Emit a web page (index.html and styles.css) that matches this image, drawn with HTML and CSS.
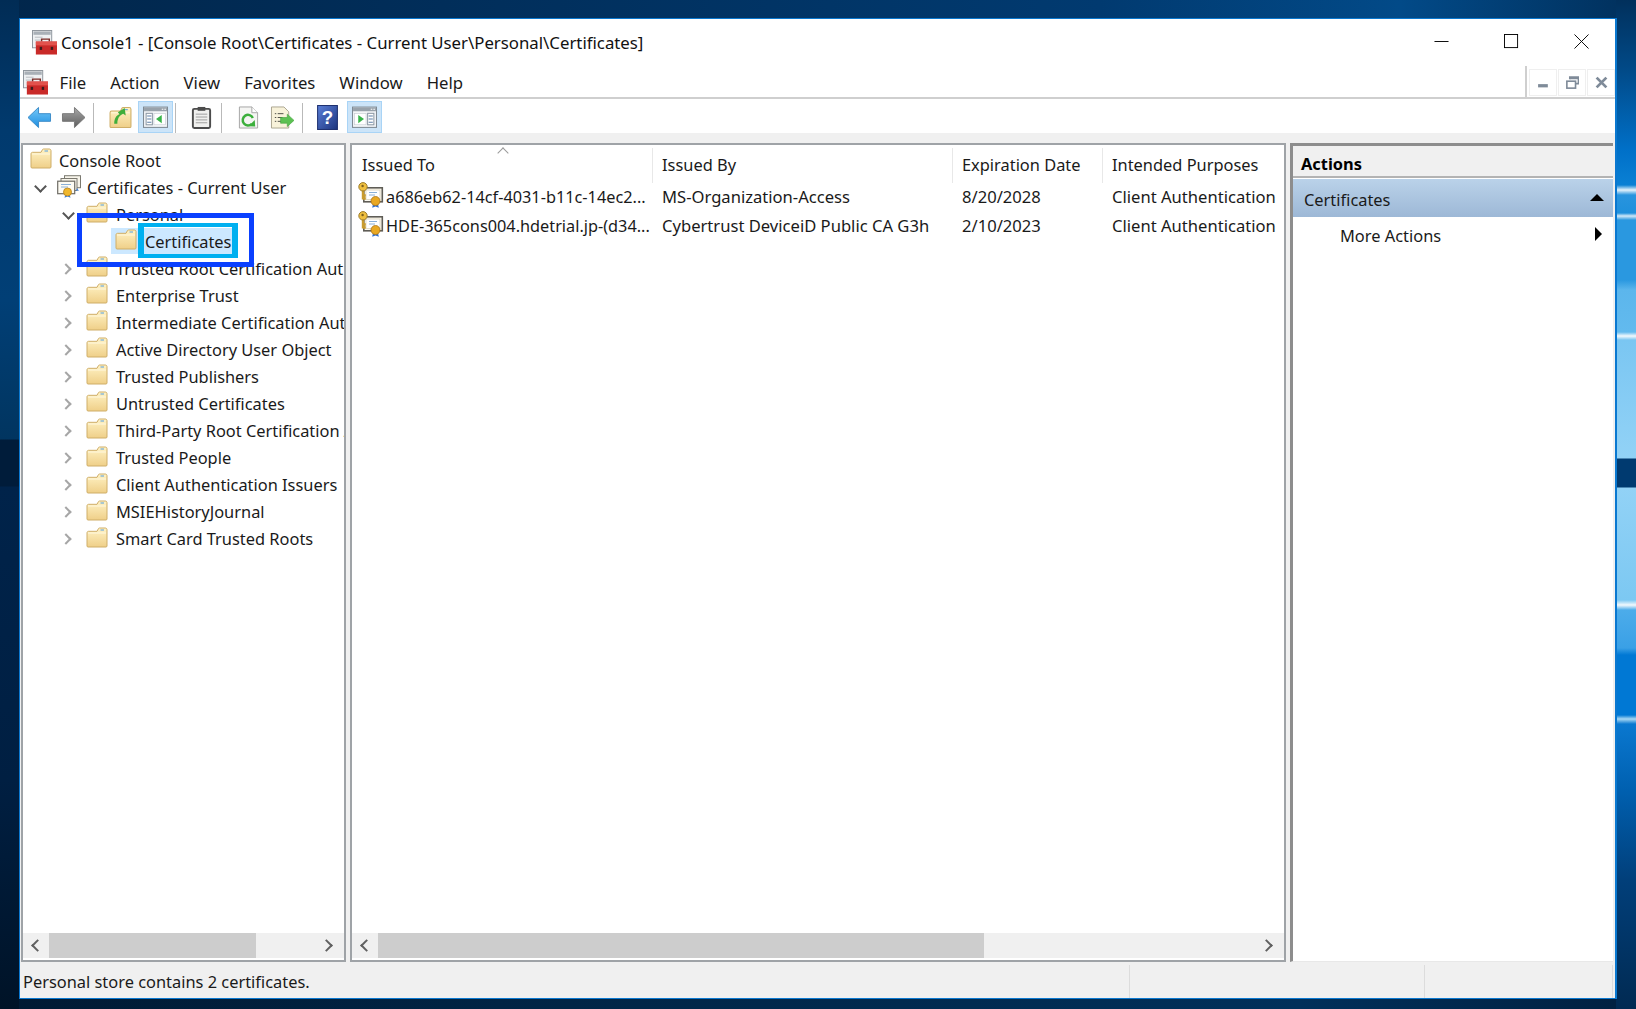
FILE: index.html
```html
<!DOCTYPE html>
<html lang="en">
<head>
<meta charset="utf-8">
<title>Console1</title>
<link rel="stylesheet" href="styles.css">
</head>
<body>
<svg class="defs" width="0" height="0" aria-hidden="true">
  <defs>
    <linearGradient id="fg" x1="0" y1="0" x2="0" y2="1"><stop offset="0" stop-color="#fff3c6"/><stop offset="1" stop-color="#efcf88"/></linearGradient>
    <symbol id="folder" viewBox="0 0 22 21">
      <path d="M1 19V6c0-1 .6-1.700 1.500-1.700H11l1.500-2.800c.2-.3.500-.5.900-.5h5.900c1 0 1.700.7 1.700 1.700V19c0 .6-.4 1-1 1H2c-.6 0-1-.4-1-1z" fill="url(#fg)" stroke="#cfae68"/>
      <path d="M2 6h18" stroke="#fff8de" fill="none"/>
      <path d="M14.500 3h3.500" stroke="#63a6de" stroke-width="1.100"/>
    </symbol>
    <symbol id="cert" viewBox="0 0 26 26">
      <rect x="5.800" y="5.800" width="18.500" height="14" fill="#fbf8ee" stroke="#5f5d56" stroke-width="1.600"/>
      <rect x="8" y="8" width="14" height="9.500" fill="#fff" stroke="#d3ccb4" stroke-width=".7"/>
      <path d="M11 10.500h8M11 13h6" stroke="#8ab0d8"/>
      <path d="M5 8v9.500M5 13.500h2.800M5 16.500h2.800" stroke="#c99c2e" stroke-width="2.400" fill="none"/>
      <circle cx="5" cy="4.800" r="4.200" fill="#efbf3e" stroke="#9c7c2c"/>
      <circle cx="4.600" cy="4" r="1.200" fill="#7d601e"/>
      <path d="M15 22l-.8 3.800 3.300-1.400 3.300 1.400-.8-3.800z" fill="#2f6fd0"/>
      <circle cx="17.500" cy="19" r="4.500" fill="#e9a822" stroke="#a8741a" stroke-width=".8"/>
    </symbol>
    <symbol id="certs" viewBox="0 0 24 23">
      <rect x="7.500" y=".7" width="16" height="12" fill="#f7f4ea" stroke="#7b7970"/>
      <rect x="4" y="3.500" width="16" height="12" fill="#f7f4ea" stroke="#7b7970"/>
      <rect x=".7" y="6.200" width="17" height="12.500" fill="#fdfbf3" stroke="#6f6d66" stroke-width="1.200"/>
      <path d="M4 9.500h10M4 12h7" stroke="#8ab0d8"/>
      <path d="M8.500 19l-1 3.800 3-1.300 3 1.300-1-3.800z" fill="#3f7fd6"/>
      <path d="M20 13l-1 3 1.500-.6 1.500.6z" fill="#3f7fd6"/>
      <circle cx="10.500" cy="17" r="4" fill="#f0b72c" stroke="#b8821a" stroke-width=".8"/>
    </symbol>
    <symbol id="toolbox" viewBox="0 0 26 26">
      <rect x=".5" y=".5" width="20" height="18" fill="#eef0f2" stroke="#8d949b"/>
      <rect x="1.500" y="1.500" width="18" height="3.500" fill="#a9b0b7"/>
      <path d="M3 7.500h8M3 10.500h6" stroke="#b7bcc1"/>
      <path d="M10 12V9.500h8V12" fill="none" stroke="#7a2b26" stroke-width="1.500"/>
      <rect x="4" y="12" width="22" height="13.500" fill="#c92a28"/>
      <rect x="4" y="12" width="22" height="4" fill="#e2524c"/>
      <rect x="8" y="17.500" width="2.500" height="3.200" fill="#3a1c1c"/>
      <rect x="19.500" y="17.500" width="2.500" height="3.200" fill="#3a1c1c"/>
    </symbol>
    <symbol id="pane" viewBox="0 0 24 22">
      <rect x=".5" y="1" width="23" height="19.500" fill="#f4f6f8" stroke="#7f8a94"/>
      <rect x="1" y="1.500" width="22" height="3.500" fill="#98a2ab"/>
      <path d="M18 3h1.500M20.500 3H22" stroke="#fff"/>
    </symbol>
  </defs>
</svg>

<main class="window">
  <header class="titlebar">
    <svg class="app-icon" viewBox="0 0 26 26"><use href="#toolbox"/></svg>
    <span class="title">Console1 - [Console Root\Certificates - Current User\Personal\Certificates]</span>
    <div class="caption">
      <svg viewBox="0 0 16 16"><path d="M.5 8h15" stroke="#000" fill="none"/></svg>
      <svg viewBox="0 0 16 16"><rect x=".5" y=".5" width="14" height="14" fill="none" stroke="#000"/></svg>
      <svg viewBox="0 0 16 16"><path d="M.5.500l15 15M15.500.500l-15 15" stroke="#000" fill="none"/></svg>
    </div>
  </header>

  <div class="menurow">
    <nav class="menubar">
      <svg class="menu-icon" viewBox="0 0 26 26"><use href="#toolbox"/></svg>
      <span>File</span><span>Action</span><span>View</span><span>Favorites</span><span>Window</span><span>Help</span>
    </nav>
    <div class="mdi">
      <span class="mdi-btn"><svg viewBox="0 0 12 12"><rect x="1" y="7.500" width="9" height="3" fill="#7f8b99"/></svg></span>
      <span class="mdi-btn"><svg viewBox="0 0 12 12"><path d="M3.500 3V1h8v6H9" fill="none" stroke="#7f8b99" stroke-width="1.500"/><path d="M3.500 2h8" stroke="#7f8b99" stroke-width="2"/><rect x=".8" y="4.800" width="8" height="6.400" fill="#fff" stroke="#7f8b99" stroke-width="1.500"/></svg></span>
      <span class="mdi-btn"><svg viewBox="0 0 12 12"><path d="M1.500 1.500l9 9M10.500 1.500l-9 9" stroke="#7f8b99" stroke-width="2.600"/></svg></span>
    </div>
  </div>

  <div class="toolbar">
    <span class="tool"><svg viewBox="0 0 26 24"><defs><linearGradient id="ba" x1="0" y1="0" x2="0" y2="1"><stop offset="0" stop-color="#74c8f8"/><stop offset="1" stop-color="#1f8ee0"/></linearGradient></defs><path d="M1 12L12 1.500V8h12.500v8H12v6.500z" fill="url(#ba)" stroke="#3b8bc8" stroke-linejoin="round"/></svg></span>
    <span class="tool"><svg viewBox="0 0 26 24"><defs><linearGradient id="fa" x1="0" y1="0" x2="0" y2="1"><stop offset="0" stop-color="#a8a8a8"/><stop offset="1" stop-color="#5e5e5e"/></linearGradient></defs><path d="M25 12L14 1.500V8H1.500v8H14v6.500z" fill="url(#fa)" stroke="#777" stroke-linejoin="round"/></svg></span>
    <i class="sep sep-a"></i>
    <span class="tool tool-up"><svg viewBox="0 0 22 22"><use href="#folder"/><path d="M5 17c0-5 2-8 5-9L8.500 6 15 2l1 7-2.500-1.500C10 9 8 12 8 17z" fill="#3fae3a"/></svg></span>
    <span class="tool on tool-tree"><svg viewBox="0 0 24 22"><use href="#pane"/><rect x="3" y="7" width="6" height="11" fill="#fff" stroke="#8d99a5"/><path d="M4 9.500h4M4 12.500h4M4 15.500h4" stroke="#5d7fa8"/><rect x="10.500" y="7" width="11" height="11" fill="#fff" stroke="#c4cbd1" stroke-width=".6"/><path d="M18 8.500v8L12.500 12.500z" fill="#39b54a"/></svg></span>
    <i class="sep sep-b"></i>
    <span class="tool tool-clip"><svg viewBox="0 0 22 24"><rect x="2" y="3" width="18" height="20" rx="1.500" fill="#f0f0ee" stroke="#4c4c4c" stroke-width="2"/><rect x="7" y="1" width="8" height="4" fill="#4c4c4c"/><path d="M5 8.500h12M5 11.500h12M5 14.500h12M5 17.500h12" stroke="#9c9c9c"/></svg></span>
    <i class="sep sep-c"></i>
    <span class="tool tool-refresh"><svg viewBox="0 0 22 24"><path d="M1.500 1h13l6 6v16h-19z" fill="#f5f5f3" stroke="#a4a4a4"/><path d="M14.500 1v6h6" fill="#fff" stroke="#a4a4a4"/><path d="M15.500 12.500a5.500 5.500 0 1 0-1 6" fill="none" stroke="#3caf3c" stroke-width="2.600"/><path d="M11 21l7 .5-.5-7z" fill="#3caf3c"/></svg></span>
    <span class="tool tool-export"><svg viewBox="0 0 26 24"><path d="M1.500 1h13l5 5v17h-18z" fill="#f8f2da" stroke="#a9a48e"/><path d="M5 8h1.500M8 8h6M5 12h1.500M8 12h5M5 16h1.500M8 16h4" stroke="#4b4b45"/><path d="M25 15l-7-6.500V12h-7v6h7v3.500z" fill="#5cc152" stroke="#3f9f3a" stroke-width=".6"/></svg></span>
    <i class="sep sep-d"></i>
    <span class="tool tool-help"><svg viewBox="0 0 20 24"><defs><linearGradient id="hp" x1="0" y1="0" x2="1" y2="1"><stop offset="0" stop-color="#5c80d8"/><stop offset="1" stop-color="#1c347e"/></linearGradient></defs><rect x=".5" y=".5" width="19" height="23" fill="url(#hp)" stroke="#1f3170"/><text x="10" y="18" class="q">?</text></svg></span>
    <span class="tool on tool-last"><svg viewBox="0 0 24 22"><use href="#pane"/><rect x="15" y="7" width="6" height="11" fill="#fff" stroke="#8d99a5"/><path d="M16 9.500h4M16 12.500h4M16 15.500h4" stroke="#5d7fa8"/><rect x="2.500" y="7" width="11" height="11" fill="#fff" stroke="#c4cbd1" stroke-width=".6"/><path d="M6 8.500v8l5.500-4z" fill="#39b54a"/></svg></span>
  </div>

  <div class="panes">
    <section class="pane tree">
      <ul class="nodes">
        <li class="node l0"><i class="tw"></i><svg class="ic"><use href="#folder"/></svg><span>Console Root</span></li>
        <li class="node l1"><i class="tw open"></i><svg class="ic-certs"><use href="#certs"/></svg><span>Certificates - Current User</span></li>
        <li class="node l2"><i class="tw open"></i><svg class="ic"><use href="#folder"/></svg><span>Personal</span></li>
        <li class="node l3 sel"><i class="tw"></i><span class="selbox"><svg class="ic"><use href="#folder"/></svg><span class="sel-t">Certificates</span></span></li>
        <li class="node l2"><i class="tw shut"></i><svg class="ic"><use href="#folder"/></svg><span>Trusted Root Certification Authorities</span></li>
        <li class="node l2"><i class="tw shut"></i><svg class="ic"><use href="#folder"/></svg><span>Enterprise Trust</span></li>
        <li class="node l2"><i class="tw shut"></i><svg class="ic"><use href="#folder"/></svg><span>Intermediate Certification Authorities</span></li>
        <li class="node l2"><i class="tw shut"></i><svg class="ic"><use href="#folder"/></svg><span>Active Directory User Object</span></li>
        <li class="node l2"><i class="tw shut"></i><svg class="ic"><use href="#folder"/></svg><span>Trusted Publishers</span></li>
        <li class="node l2"><i class="tw shut"></i><svg class="ic"><use href="#folder"/></svg><span>Untrusted Certificates</span></li>
        <li class="node l2"><i class="tw shut"></i><svg class="ic"><use href="#folder"/></svg><span>Third-Party Root Certification Authorities</span></li>
        <li class="node l2"><i class="tw shut"></i><svg class="ic"><use href="#folder"/></svg><span>Trusted People</span></li>
        <li class="node l2"><i class="tw shut"></i><svg class="ic"><use href="#folder"/></svg><span>Client Authentication Issuers</span></li>
        <li class="node l2"><i class="tw shut"></i><svg class="ic"><use href="#folder"/></svg><span>MSIEHistoryJournal</span></li>
        <li class="node l2"><i class="tw shut"></i><svg class="ic"><use href="#folder"/></svg><span>Smart Card Trusted Roots</span></li>
      </ul>
      <div class="hscroll">
        <span class="arrow lft"></span>
        <div class="track"><div class="thumb thumb-tree"></div></div>
        <span class="arrow rgt"></span>
      </div>
    </section>

    <section class="pane list">
      <div class="table">
        <div class="cols head">
          <div class="th th-sort">Issued To</div><div class="th">Issued By</div><div class="th">Expiration Date</div><div class="th">Intended Purposes</div>
        </div>
        <div class="cols row">
          <div class="td first"><svg class="ic-cert"><use href="#cert"/></svg><span>a686eb62-14cf-4031-b11c-14ec2...</span></div><div class="td">MS-Organization-Access</div><div class="td">8/20/2028</div><div class="td">Client Authentication</div>
        </div>
        <div class="cols row">
          <div class="td first"><svg class="ic-cert"><use href="#cert"/></svg><span>HDE-365cons004.hdetrial.jp-(d34...</span></div><div class="td">Cybertrust DeviceiD Public CA G3h</div><div class="td">2/10/2023</div><div class="td">Client Authentication</div>
        </div>
      </div>
      <div class="hscroll">
        <span class="arrow lft"></span>
        <div class="track"><div class="thumb thumb-list"></div></div>
        <span class="arrow rgt"></span>
      </div>
    </section>

    <aside class="actions">
      <h2>Actions</h2>
      <div class="act-group"><span>Certificates</span><i class="tri-up"></i></div>
      <div class="act-item"><span>More Actions</span><i class="tri-right"></i></div>
    </aside>
  </div>

  <footer class="status">
    <div class="st st-a">Personal store contains 2 certificates.</div>
    <div class="st st-b"></div>
    <div class="st st-c"></div>
  </footer>

  <div class="mark-outer"></div>
  <div class="mark-inner"></div>
</main>
</body>
</html>
```
FILE: styles.css
```css
* { box-sizing: border-box; }
html, body { height: 100%; }
body {
  margin: 0;
  padding: 18px 19px 10px;
  overflow: hidden;
  font-family: "Noto Sans", "Open Sans", sans-serif;
  font-size: 16.400px;
  color: #1a1a1a;
  background-color: #012444;
  background-repeat: no-repeat;
  background-image:
    linear-gradient(180deg,
      #01305c 0, #014a88 70px, #0070c8 150px, #0a80d4 185px, #e4f2fb 190px, #2894de 195px, #1f90dc 213px, #d0e8f8 216px, #2a98e0 220px,
      #2a98e0 280px, #5cb6ec 290px, #62baee 332px, #f2f9fd 336px, #7ac6f2 340px, #92d2f6 458px,
      #003a70 459px, #003a70 487px, #92d2f6 488px, #7cc8f2 600px, #f2f9fd 605px, #4cacea 610px, #3aa0e6 648px, #0078d4 655px,
      #0078d4 715px, #a8d8f4 719px, #0a78d0 724px, #0060b0 790px, #013f7a 880px, #012a52 1009px),
    linear-gradient(180deg, #012c55 0, #013a6e 130px, #013f76 300px, #013560 439px, #001c3a 440px, #001c3a 486px, #00234a 487px, #001f42 780px, #001327 1009px),
    linear-gradient(90deg, #01264b 0, #012f5c 500px, #013a70 1100px, #024a88 1400px, #01305c 1636px),
    linear-gradient(90deg, #001a33 0, #012444 500px, #01305a 1300px, #012040 1636px);
  background-position: right top, left top, left top, left bottom;
  background-size: 20px 100%, 19px 100%, 100% 18px, 100% 11px;
}
.defs { position: absolute; }
.window {
  position: relative;
  height: 981px;
  display: flex;
  flex-direction: column;
  background: #fff;
  border: 1px solid #0a78d0;
  border-right-width: 2px;
}

.titlebar { height: 47px; display: flex; align-items: center; padding-left: 12px; font-size: 16.800px; color: #111; }
.app-icon { width: 25px; height: 25px; margin-right: 4px; flex: none; }
.title { white-space: nowrap; flex: 1; }
.caption { display: flex; align-items: center; gap: 55px; padding-right: 26px; margin-top: -2px; }
.caption svg { width: 15px; height: 15px; display: block; }

.menurow { height: 33px; display: flex; }
.menubar { flex: 1; display: flex; align-items: center; gap: 24px; font-size: 16.700px; border-bottom: 2px solid #cfcfcf; border-right: 2px solid #cfcfcf; padding: 2px 0 0 3px; }
.menu-icon { width: 25px; height: 25px; margin-right: -12.500px; flex: none; }
.mdi { width: 88px; display: flex; gap: 1px; padding: 3px 0 4px 2px; border-bottom: 2px solid #cfcfcf; }
.mdi-btn { width: 28px; height: 27px; border: 1px solid #efefef; display: flex; align-items: center; justify-content: center; }
.mdi-btn svg { width: 13px; height: 13px; }

.toolbar { height: 34px; display: flex; align-items: flex-end; padding-left: 2px; }
.tool { display: flex; align-items: center; justify-content: center; height: 32px; width: 34px; flex: none; }
.tool svg { width: 25px; height: 23px; }
.tool.on { width: 35px; background: #cce4f8; border: 1px solid #a9d4f6; }
.tool-up { margin-left: 9px; }
.tool-tree { margin-left: 1px; }
.tool-clip { margin-left: 8px; }
.tool-refresh { margin-left: 9px; }
.tool-help { margin-left: 7.500px; }
.tool-help svg { width: 21px; height: 25px; }
.tool-last { margin-left: 2px; }
.sep { width: 1px; height: 30px; background: #b9b9b9; margin-left: 3px; flex: none; }
.sep-b { margin-left: 2px; }
.q { font-family: "Liberation Sans", sans-serif; font-size: 18px; font-weight: 700; fill: #fff; text-anchor: middle; }

.panes { flex: 1; min-height: 0; display: flex; gap: 4px; background: #f0f0f0; padding: 10px 2px 0 1px; }
.pane { background: #fff; border: 2px solid #9fa3a7; display: flex; flex-direction: column; min-width: 0; overflow: hidden; }
.tree { width: 325px; flex: none; }
.list { width: 936px; flex: none; }

.nodes { list-style: none; margin: 0; padding: 1.500px 0 0; flex: 1; min-height: 0; overflow: hidden; }
.node { height: 27.050px; display: flex; align-items: center; white-space: nowrap; }
.tw { width: 9px; height: 9px; flex: none; position: relative; }
.tw.open::before { content: ""; position: absolute; left: 0; top: -1px; width: 7px; height: 7px; border-right: 2px solid #555; border-bottom: 2px solid #555; transform: rotate(45deg); }
.tw.shut::before { content: ""; position: absolute; left: -2px; top: 1px; width: 6px; height: 6px; border-right: 2px solid #a6a6a6; border-top: 2px solid #a6a6a6; transform: rotate(45deg); }
.ic { width: 22px; height: 21px; flex: none; margin: -3px 7px 0 0; }
.ic-cert { width: 26px; height: 26px; flex: none; }
.ic-certs { width: 24px; height: 23px; flex: none; margin: -1px 6px 0 0; }
.l0 { padding-left: 7px; }
.l0 .tw { display: none; }
.l1 { padding-left: 13px; }
.l1 .tw { margin-right: 12px; }
.l2 { padding-left: 41px; }
.l2 .tw { margin-right: 13px; }
.l2 .ic { margin-right: 8px; }
.sel { padding-left: 88px; }
.sel .tw { display: none; }
.selbox { display: flex; align-items: center; height: 26px; background: #cce8ff; padding-left: 4px; }
.selbox .ic { margin-right: 6px; }
.sel-t { padding: 0 6px 0 2px; }

.hscroll { height: 25px; flex: none; display: flex; background: #f0f0f0; margin-bottom: 2px; }
.arrow { width: 24px; flex: none; position: relative; }
.arrow.lft { width: 26px; }
.arrow::before { content: ""; position: absolute; top: 8px; width: 7px; height: 7px; border-top: 2px solid #606060; border-left: 2px solid #606060; }
.arrow.lft::before { left: 10px; transform: rotate(-45deg); }
.arrow.rgt::before { right: 13px; transform: rotate(135deg); }
.track { flex: 1; display: flex; }
.thumb { background: #cdcdcd; height: 100%; }
.thumb-tree { width: 207px; }
.thumb-list { width: 606px; }

.table { flex: 1; min-height: 0; }
.cols { display: grid; grid-template-columns: 300px 300px 150px 1fr; }
.head { height: 37px; padding-top: 2px; }
.th { padding: 5px 0 0 9px; border-left: 1px solid #e8e8e8; position: relative; height: 35px; margin-top: 1px; }
.th:first-child { border-left: 0; padding-left: 10px; }
.th-sort::before { content: ""; position: absolute; left: 147px; top: 1px; width: 7px; height: 7px; border-left: 1px solid #9a9a9a; border-top: 1px solid #9a9a9a; transform: rotate(45deg); }
.row { height: 29px; align-items: center; white-space: nowrap; font-size: 16.600px; }
.td { padding-left: 10px; min-width: 0; }
.first { display: flex; align-items: center; padding-left: 6px; font-size: 16.300px; }
.first .ic-cert { margin-right: 2px; margin-top: -3px; }

.actions { flex: 1; min-width: 0; background: #fff; border-left: 3px solid #8d8d8d; border-top: 3px solid #8d8d8d; border-bottom: 1px solid #e8e8e8; display: flex; flex-direction: column; }
.actions h2 { margin: 0; height: 32px; padding: 5px 0 0 8px; display: flex; align-items: center; font-size: 16.400px; font-weight: 700; color: #000; background: #f0f0f0; border-bottom: 2px solid #b3b3b3; }
.act-group { height: 38px; margin-top: 1px; display: flex; align-items: center; justify-content: space-between; padding: 2px 9px 0 11px; background: linear-gradient(#bad2e9, #9db8d6); }
.tri-up { width: 0; height: 0; border: 7px solid transparent; border-top: 0; border-bottom: 7px solid #000; margin-top: -3px; }
.act-item { height: 37px; display: flex; align-items: center; justify-content: space-between; padding: 0 11px 0 47px; }
.tri-right { width: 0; height: 0; border: 7px solid transparent; border-right: 0; border-left: 7px solid #000; margin-top: -4px; }

.status { height: 36px; flex: none; display: flex; background: #f0f0f0; padding-top: 3px; }
.st { height: 33px; border-right: 1px solid #dcdcdc; white-space: nowrap; padding-left: 3px; line-height: 34px; }
.st-a { width: 1110px; }
.st-b { width: 295px; }
.st-c { flex: 1; margin-right: 2px; }

.mark-outer { position: absolute; left: 57px; top: 194px; width: 177px; height: 54px; border: 5px solid #0a40ff; pointer-events: none; }
.mark-inner { position: absolute; left: 118px; top: 204px; width: 100px; height: 35px; border: solid #00b0f0; border-width: 4px 6px; pointer-events: none; }
```
